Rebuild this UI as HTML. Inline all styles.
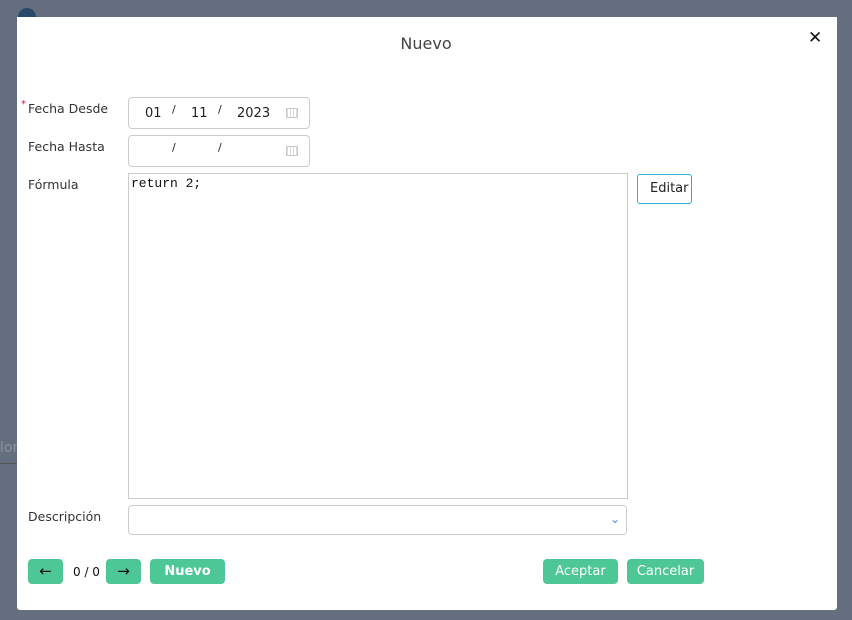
<!DOCTYPE html>
<html><head><meta charset="utf-8"><style>
body{margin:0;width:852px;height:620px;background:#646e7e;position:relative;overflow:hidden;font-family:"DejaVu Sans","Liberation Sans",sans-serif;}
.abs{position:absolute}
.modal{left:17px;top:17px;width:820px;height:593px;background:#fff;border-radius:0 0 3px 3px}
.lbl{font-size:12.5px;color:#333;}
.box{border:1px solid #ccc;border-radius:4px;background:#fff;box-sizing:border-box}
.btn{background:#4dc795;color:#fff;border-radius:4px;font-size:13px;font-weight:bold;text-align:center;line-height:25px;height:25px}
.cal{width:12px;height:10px;border:1px solid #c8c8c8;background:repeating-linear-gradient(90deg,#ddd 0 1px,#fff 1px 3px);box-sizing:border-box}
.d{font-size:13px;color:#222}
</style></head><body>
<div class="abs" style="left:18px;top:8px;width:18px;height:18px;border-radius:50%;background:#2a4a6a"></div>
<div class="abs" style="left:0;top:440px;color:#8a93a0;font-size:14px">lor</div>
<div class="abs" style="left:0;top:463px;width:17px;height:1px;background:#555"></div>
<div class="abs modal"></div>
<div class="abs" style="left:0;width:852px;top:34px;text-align:center;font-size:16px;color:#444">Nuevo</div>
<div class="abs" style="left:808px;top:28px;font-size:17px;font-weight:bold;color:#111">✕</div>

<div class="abs" style="left:21px;top:99px;color:#e06;font-size:10px">*</div>
<div class="abs lbl" style="left:28px;top:101px">Fecha Desde</div>
<div class="abs box" style="left:128px;top:97px;width:182px;height:32px"></div>
<div class="abs d" style="left:145px;top:106px">01</div>
<div class="abs d" style="left:172px;top:103px;font-size:11px">/</div>
<div class="abs d" style="left:191px;top:106px">11</div>
<div class="abs d" style="left:218px;top:103px;font-size:11px">/</div>
<div class="abs d" style="left:237px;top:106px">2023</div>
<div class="abs cal" style="left:286px;top:108px"></div>

<div class="abs lbl" style="left:28px;top:139px">Fecha Hasta</div>
<div class="abs box" style="left:128px;top:135px;width:182px;height:32px"></div>
<div class="abs d" style="left:172px;top:141px;font-size:11px">/</div>
<div class="abs d" style="left:218px;top:141px;font-size:11px">/</div>
<div class="abs cal" style="left:286px;top:146px"></div>

<div class="abs lbl" style="left:28px;top:177px">Fórmula</div>
<div class="abs" style="left:128px;top:173px;width:500px;height:326px;border:1px solid #ccc;box-sizing:border-box"></div>
<div class="abs" style="left:131px;top:176px;font-family:'Liberation Mono',monospace;font-size:13px;color:#111">return 2;</div>
<div class="abs" style="left:637px;top:174px;width:55px;height:30px;border:1px solid #2ab0cc;border-radius:3px;box-sizing:border-box;font-size:13px;color:#222;line-height:28px;padding-left:12px">Editar</div>

<div class="abs lbl" style="left:28px;top:509px">Descripción</div>
<div class="abs box" style="left:128px;top:505px;width:499px;height:30px"></div>
<div class="abs" style="left:610px;top:512px;color:#4a8fe0;font-size:12px">⌄</div>

<div class="abs btn" style="left:28px;top:559px;width:35px;color:#111;font-weight:normal;font-size:15px">←</div>
<div class="abs" style="left:73px;top:565px;font-size:12px;color:#111">0 / 0</div>
<div class="abs btn" style="left:106px;top:559px;width:35px;color:#111;font-weight:normal;font-size:15px">→</div>
<div class="abs btn" style="left:150px;top:559px;width:75px">Nuevo</div>
<div class="abs btn" style="left:543px;top:559px;width:75px;font-weight:normal">Aceptar</div>
<div class="abs btn" style="left:627px;top:559px;width:77px;font-weight:normal">Cancelar</div>
</body></html>
